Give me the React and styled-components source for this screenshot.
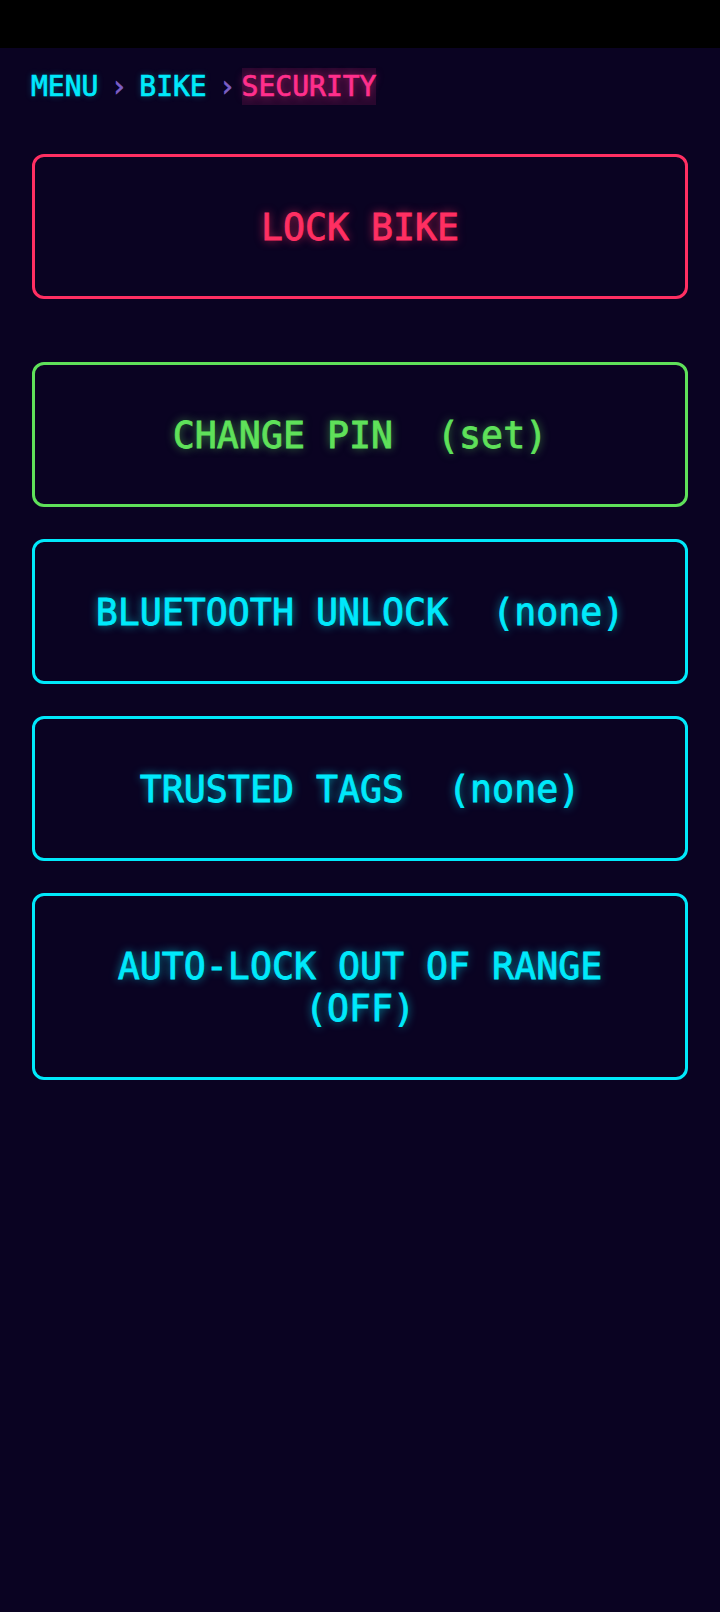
import React from 'react';
import styled, { createGlobalStyle } from 'styled-components';

const GlobalStyle = createGlobalStyle`
  html, body {
    margin: 0;
    padding: 0;
    background: #0a0322;
  }
  body {
    font-family: 'DejaVu Sans Mono', 'Liberation Mono', monospace;
    -webkit-font-smoothing: antialiased;
  }
`;

const COLORS = {
  red: '#ff2f62',
  green: '#5fe15a',
  cyan: '#00e9fb',
};

const GLOWS = {
  red: 'rgba(255, 47, 98, 0.75)',
  green: 'rgba(95, 225, 90, 0.65)',
  cyan: 'rgba(0, 233, 251, 0.7)',
};

export const Screen = styled.div`
  min-height: 1612px;
  background: #0a0322;
  color: ${COLORS.cyan};
`;

export const StatusBar = styled.div`
  height: 48px;
  background: #000;
`;

export const Content = styled.main`
  padding: 0 32px;
`;

export const Breadcrumb = styled.nav`
  display: flex;
  align-items: center;
  margin: 20px 0 0 -1px;
  font-size: 28px;
  -webkit-text-stroke: 0.7px currentColor;
`;

export const Crumb = styled.span`
  color: ${COLORS.cyan};
  text-shadow: 0 0 6px rgba(0, 233, 251, 0.35);
`;

export const Separator = styled.span`
  color: #7c5fc6;
  margin: 0 12px;
`;

export const CurrentCrumb = styled.span`
  color: #ff2f8c;
  margin-left: -6px;
  padding: 2px 0;
  background: rgba(255, 47, 140, 0.13);
  text-shadow: 0 0 8px rgba(255, 47, 140, 0.6);
`;

export const ButtonList = styled.div`
  display: flex;
  flex-direction: column;
  gap: 32px;
  margin-top: 49px;
`;

export const ActionButton = styled.button`
  display: block;
  width: 100%;
  box-sizing: border-box;
  padding: 50px 24px 47px;
  margin-bottom: ${props => (props.$spaced ? '31px' : '0')};
  background: transparent;
  border: 3px solid ${props => COLORS[props.$tone]};
  border-radius: 12px;
  color: ${props => COLORS[props.$tone]};
  font-family: 'DejaVu Sans Mono', 'Liberation Mono', monospace;
  font-size: 36.6px;
  font-weight: 400;
  line-height: 42px;
  text-align: center;
  white-space: pre-wrap;
  -webkit-text-stroke: 0.8px currentColor;
  text-shadow: 0 0 10px ${props => GLOWS[props.$tone]};
  cursor: pointer;
`;

const items = [
  { label: 'CHANGE PIN', status: '(set)', tone: 'green' },
  { label: 'BLUETOOTH UNLOCK', status: '(none)', tone: 'cyan' },
  { label: 'TRUSTED TAGS', status: '(none)', tone: 'cyan' },
  { label: 'AUTO-LOCK OUT OF RANGE', status: '(OFF)', tone: 'cyan' },
];

export default function App() {
  return (
    <Screen>
      <GlobalStyle />
      <StatusBar />
      <Content>
        <Breadcrumb>
          <Crumb>MENU</Crumb>
          <Separator>›</Separator>
          <Crumb>BIKE</Crumb>
          <Separator>›</Separator>
          <CurrentCrumb>SECURITY</CurrentCrumb>
        </Breadcrumb>
        <ButtonList>
          <ActionButton $tone="red" $spaced>LOCK BIKE</ActionButton>
          {items.map(item => (
            <ActionButton key={item.label} $tone={item.tone}>
              {item.label}  {item.status}
            </ActionButton>
          ))}
        </ButtonList>
      </Content>
    </Screen>
  );
}
